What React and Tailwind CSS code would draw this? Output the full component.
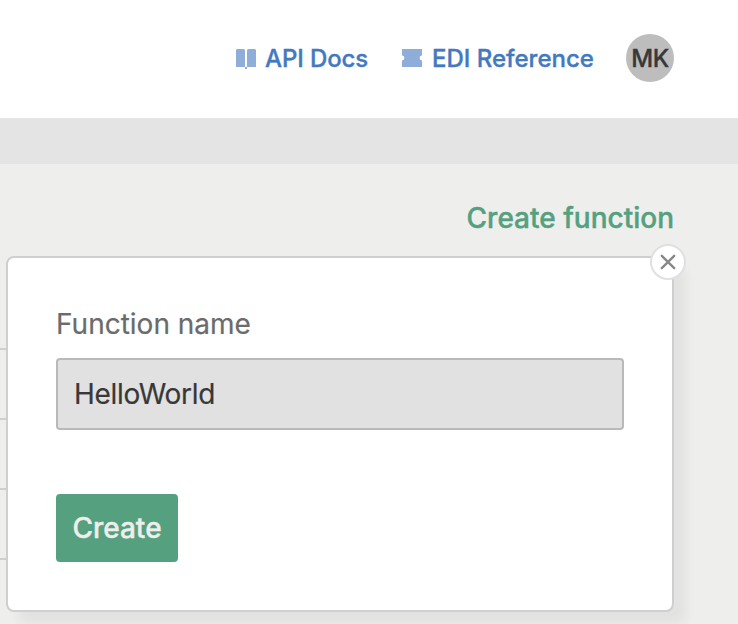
const BookIcon = () => (
  <svg width="20" height="20" viewBox="0 0 20 20" fill="#8fadd9" className="block">
    <path d="M0 1L1 0H7.5Q9 0 9 2V18H0Z" />
    <path d="M20 1L19 0H12.5Q11 0 11 2V18H20Z" />
    <rect x="9" y="18" width="2" height="2" />
  </svg>
);

const TicketIcon = () => (
  <svg width="20" height="18" viewBox="0 0 20 18" fill="#8fadd9" className="block">
    <path d="M0 0H20V6.6A2.4 2.4 0 0 0 20 11.4V18H0V11.4A2.4 2.4 0 0 0 0 6.6Z" />
  </svg>
);

const rows = [1, 2, 3, 4];

export default function App() {
  return (
    <div className="relative flex h-[624px] w-[738px] flex-col overflow-hidden bg-[#eeeeec] font-['Inter',sans-serif]">
      <header className="flex h-[118px] shrink-0 justify-end bg-white pr-16 pt-[34px] text-2xl font-medium text-[#4279bf] [-webkit-text-stroke:0.35px]">
        <a className="flex h-12 w-[132px] items-start whitespace-nowrap">
          <span className="mt-[15px] mr-[9px] shrink-0"><BookIcon /></span>
          <span className="leading-[50px] tracking-[-0.004em]">API Docs</span>
        </a>
        <a className="ml-[34px] flex h-12 w-48 items-start whitespace-nowrap">
          <span className="mt-[15px] mr-[10px] shrink-0"><TicketIcon /></span>
          <span className="leading-[50px]">EDI Reference</span>
        </a>
        <div className="ml-8 flex size-12 justify-center rounded-full bg-[#bdbdbd] leading-[50px] tracking-[-0.02em] text-[#383838]">
          MK
        </div>
      </header>
      <div className="h-[46px] shrink-0 bg-[#e4e4e4]" />
      <main className="flex grow flex-col pr-16">
        <div className="flex h-[114px] justify-end pt-8">
          <a className="whitespace-nowrap text-[28px] font-medium leading-[44px] text-[#54a07f] [-webkit-text-stroke:0.4px]">Create function</a>
        </div>
        <div className="pt-[2px]">
          {rows.map((row) => (
            <div key={row} className="h-[70px] border-b-2 border-[#cfcfcf]" />
          ))}
        </div>
      </main>

      <section className="absolute left-[6px] top-[256px] flex h-[356px] w-[668px] flex-col items-start rounded-lg border-2 border-[#cfcfcf] bg-white px-12 pt-12 shadow-[12px_12px_12px_rgba(0,0,0,0.05)]">
        <label className="text-[28px] leading-9 text-[#6b6b6b] [-webkit-text-stroke:0.2px]">Function name</label>
        <div className="mt-4 flex h-[72px] w-full items-center rounded border-2 border-[#b9b9b9] bg-[#e1e1e1] px-4 text-[28px] tracking-[-0.01em] text-[#383838] [-webkit-text-stroke:0.2px]">
          HelloWorld
        </div>
        <button className="mt-16 h-[68px] w-[122px] rounded bg-[#54a07f] text-[28px] font-medium text-[#eeeeec] [-webkit-text-stroke:0.4px]">
          Create
        </button>
        <button className="absolute -right-[14px] -top-[14px] flex size-9 items-center justify-center rounded-full border-2 border-[#e0e0e0] bg-white">
          <svg width="16" height="16" viewBox="0 0 16 16" fill="none" stroke="#888888" strokeWidth="2.4" strokeLinecap="round">
            <path d="M1.8 1.8L14.2 14.2M14.2 1.8L1.8 14.2" />
          </svg>
        </button>
      </section>
    </div>
  );
}
